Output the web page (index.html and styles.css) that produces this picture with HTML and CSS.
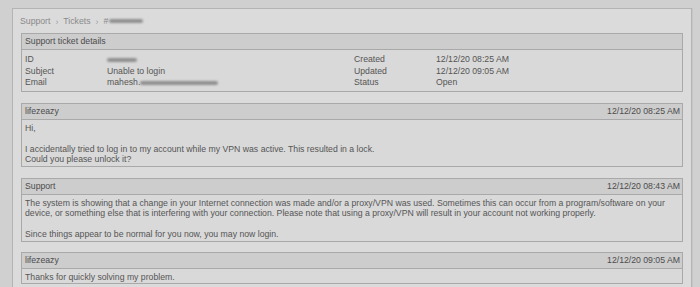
FILE: index.html
```html
<!DOCTYPE html>
<html>
<head>
<meta charset="utf-8">
<link rel="stylesheet" href="styles.css">
</head>
<body>
<div class="panel">
  <div class="crumbs">
    <span>Support</span><span class="sep">&rsaquo;</span><span>Tickets</span><span class="sep">&rsaquo;</span><span>#</span><span class="blur b-crumb"></span>
  </div>

  <div class="box">
    <div class="head"><span>Support ticket details</span></div>
    <div class="details">
      <span>ID</span><span><span class="blur b-id"></span></span><span>Created</span><span>12/12/20 08:25 AM</span>
      <span>Subject</span><span>Unable to login</span><span>Updated</span><span>12/12/20 09:05 AM</span>
      <span>Email</span><span>mahesh.<span class="blur b-mail"></span></span><span>Status</span><span>Open</span>
    </div>
  </div>

  <div class="box">
    <div class="head"><span>lifezeazy</span><span>12/12/20 08:25 AM</span></div>
    <div class="body">
      <p>Hi,</p>
      <p>I accidentally tried to log in to my account while my VPN was active. This resulted in a lock.<br>Could you please unlock it?</p>
    </div>
  </div>

  <div class="box">
    <div class="head"><span>Support</span><span>12/12/20 08:43 AM</span></div>
    <div class="body">
      <p>The system is showing that a change in your Internet connection was made and/or a proxy/VPN was used. Sometimes this can occur from a program/software on your device, or something else that is interfering with your connection. Please note that using a proxy/VPN will result in your account not working properly.</p>
      <p>Since things appear to be normal for you now, you may now login.</p>
    </div>
  </div>

  <div class="box last">
    <div class="head"><span>lifezeazy</span><span>12/12/20 09:05 AM</span></div>
    <div class="body">
      <p>Thanks for quickly solving my problem.</p>
    </div>
  </div>
</div>
</body>
</html>
```

FILE: styles.css
```css
html, body {
  margin: 0;
  padding: 0;
  background: #d0d0d0;
  height: 100%;
  overflow: hidden;
}
body {
  padding: 8px 0 0 12px;
  font-family: "Liberation Sans", Arial, sans-serif;
  font-size: 8.7px;
  color: #555555;
}
.panel {
  width: 662px;
  height: 300px;
  background: #dbdbdb;
  border: 1px solid #b4b4b4;
  box-shadow: 1px 0 0 #c6c6c6;
  padding: 0 8px;
}
.crumbs {
  display: flex;
  align-items: center;
  height: 24px;
  margin-left: -1px;
  color: #8a8a8a;
  font-size: 8.7px;
}
.sep {
  margin: 1px 5px 0 5px;
  color: #a0a0a0;
}
.blur {
  display: inline-block;
  height: 4px;
  background: #909090;
  border-radius: 2px;
  filter: blur(1.3px);
  vertical-align: middle;
}
.b-crumb { width: 34px; margin-left: 1px; }
.b-id { width: 30px; }
.b-mail { width: 78px; }
.box {
  border: 1px solid #a9a9a9;
  background: #d9d9d9;
  margin-bottom: 11px;
}
.box.last {
  margin-top: -1px;
}
.head {
  display: flex;
  justify-content: space-between;
  background: #cdcdcd;
  border-bottom: 1px solid #a9a9a9;
  line-height: 15px;
  padding: 0 2px 0 3px;
  color: #4c4c4c;
}
.details {
  display: grid;
  grid-template-columns: 82px 247px 82px 1fr;
  line-height: 11.5px;
  padding: 4px 3px 2px;
}
.body {
  line-height: 10.5px;
  padding: 3px 3px 1px;
}
.body p {
  margin: 0 0 10.5px;
}
.body p:last-child {
  margin-bottom: 0;
}
```
